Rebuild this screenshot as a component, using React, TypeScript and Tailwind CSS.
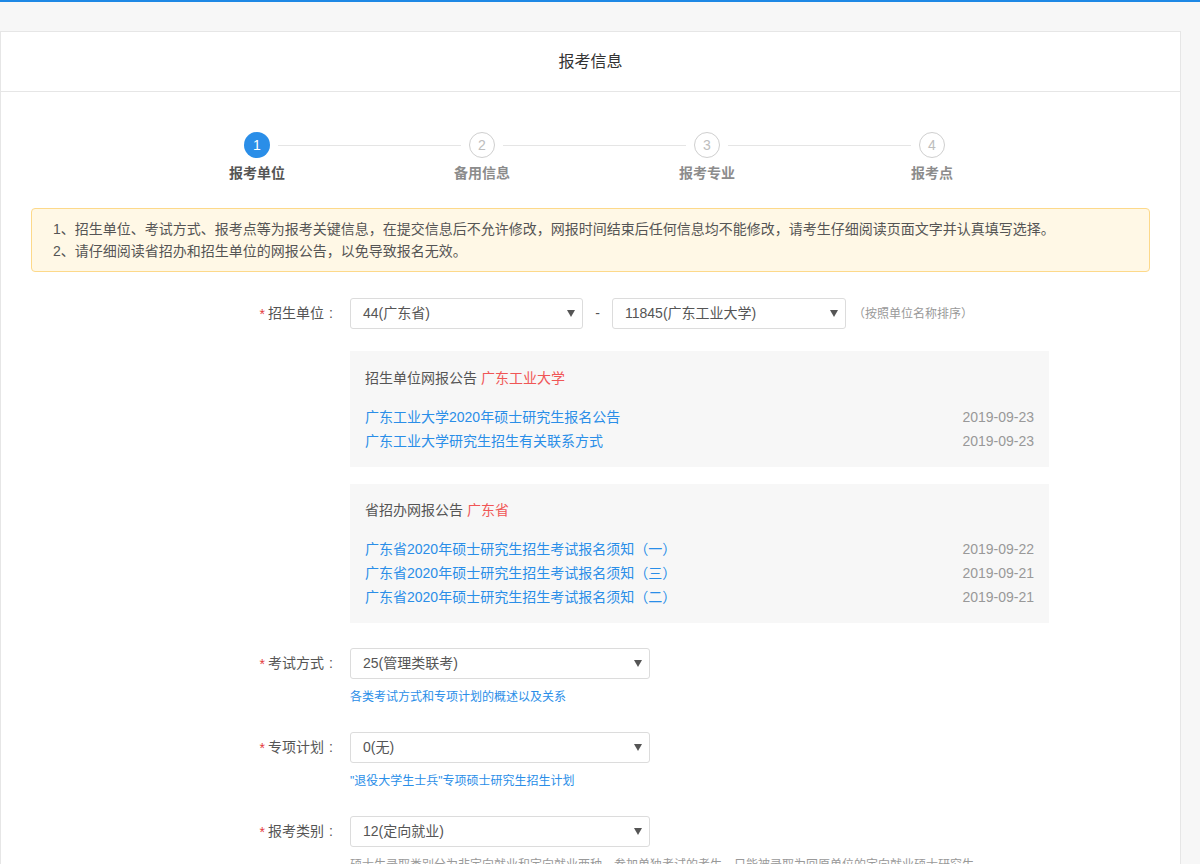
import React from 'react';

const FONT = { fontFamily: '"Liberation Sans", "Noto Sans CJK SC", sans-serif' };

const steps = ['报考单位', '备用信息', '报考专业', '报考点'];

function Caret() {
  return (
    <svg width="8" height="7" viewBox="0 0 8 7" className="shrink-0">
      <path d="M0 0 L8 0 L4 7 Z" fill="#555" />
    </svg>
  );
}

function FakeSelect({ value, width }: { value: string; width: string }) {
  return (
    <div
      className={`${width} h-[31px] border border-[#dcdcdc] rounded-[3px] bg-white flex items-center justify-between pl-[12px] pr-[7px] text-[14px] text-[#555]`}
    >
      <span>{value}</span>
      <Caret />
    </div>
  );
}

function Label({ text }: { text: string }) {
  return (
    <div className="w-[337px] h-[31px] flex items-center justify-end text-[14px] text-[#555] shrink-0">
      <span className="text-[#e4393c] mr-[3px] text-[14px] leading-none">*</span>
      <span>{text}</span>
      <span className="w-[14px] text-center">:</span>
    </div>
  );
}

function Notice({
  title,
  highlight,
  items,
  pt,
}: {
  title: string;
  highlight: string;
  items: { text: string; date: string }[];
  pt: string;
}) {
  return (
    <div className={`w-[699px] bg-[#f7f7f7] px-[15px] ${pt} pb-[14px]`}>
      <div className="leading-[20px] text-[14px] text-[#555]">
        {title} <span className="text-[#f05656]">{highlight}</span>
      </div>
      <div className="mt-[17px]">
        {items.map((it) => (
          <div key={it.text} className="flex justify-between leading-[24px] text-[14px]">
            <a className="text-[#2a8ee8] cursor-pointer">{it.text}</a>
            <span className="text-[#999]">{it.date}</span>
          </div>
        ))}
      </div>
    </div>
  );
}

export default function App() {
  return (
    <div className="min-h-screen bg-[#f7f7f7] border-t-2 border-[#1e88e5]" style={FONT}>
      <div className="pt-[29px]">
        <div className="w-[1181px] bg-white border border-[#e6e6e6] pb-[40px]">
          {/* 标题 */}
          <div className="h-[60px] flex items-center justify-center border-b border-[#e6e6e6] text-[16px] text-[#333]">
            报考信息
          </div>

          {/* 步骤条 */}
          <div className="w-[701px] ml-[243px] mt-[40px] flex items-start">
            {steps.map((s, i) => (
              <React.Fragment key={s}>
                {i > 0 && <div className="flex-1 h-px bg-[#e5e5e5] mx-[8px] mt-[13px]" />}
                <div className="w-[26px] flex flex-col items-center">
                  <div
                    className={
                      i === 0
                        ? 'w-[26px] h-[26px] rounded-full bg-[#2a8ee8] text-white flex items-center justify-center text-[14px]'
                        : 'w-[26px] h-[26px] rounded-full border border-[#cfcfcf] text-[#bdbdbd] flex items-center justify-center text-[14px]'
                    }
                  >
                    {i + 1}
                  </div>
                  <div
                    className={`mt-[5px] whitespace-nowrap text-[14px] font-bold leading-[20px] ${
                      i === 0 ? 'text-[#555]' : 'text-[#8c8c8c]'
                    }`}
                  >
                    {s}
                  </div>
                </div>
              </React.Fragment>
            ))}
          </div>

          {/* 提示 */}
          <div className="mx-[30px] mt-[25px] bg-[#fff8e6] border border-[#fdd98a] rounded-[4px] pl-[21px] pr-[20px] py-[9px] text-[14px] leading-[22px] text-[#555]">
            <p>1、招生单位、考试方式、报考点等为报考关键信息，在提交信息后不允许修改，网报时间结束后任何信息均不能修改，请考生仔细阅读页面文字并认真填写选择。</p>
            <p>2、请仔细阅读省招办和招生单位的网报公告，以免导致报名无效。</p>
          </div>

          {/* 招生单位 */}
          <div className="mt-[26px] flex gap-[12px]">
            <Label text="招生单位" />
            <div className="flex flex-col">
              <div className="flex items-center">
                <FakeSelect value="44(广东省)" width="w-[233px]" />
                <span className="w-[29px] text-center text-[14px] text-[#555]">-</span>
                <FakeSelect value="11845(广东工业大学)" width="w-[234px]" />
                <span className="ml-[7px] text-[12px] text-[#999]">（按照单位名称排序）</span>
              </div>
              <div className="mt-[22px]">
                <Notice
                  title="招生单位网报公告"
                  highlight="广东工业大学"
                  pt="pt-[17px]"
                  items={[
                    { text: '广东工业大学2020年硕士研究生报名公告', date: '2019-09-23' },
                    { text: '广东工业大学研究生招生有关联系方式', date: '2019-09-23' },
                  ]}
                />
              </div>
              <div className="mt-[17px]">
                <Notice
                  title="省招办网报公告"
                  highlight="广东省"
                  pt="pt-[16px]"
                  items={[
                    { text: '广东省2020年硕士研究生招生考试报名须知（一）', date: '2019-09-22' },
                    { text: '广东省2020年硕士研究生招生考试报名须知（三）', date: '2019-09-21' },
                    { text: '广东省2020年硕士研究生招生考试报名须知（二）', date: '2019-09-21' },
                  ]}
                />
              </div>
            </div>
          </div>

          {/* 考试方式 */}
          <div className="mt-[25px] flex gap-[12px]">
            <Label text="考试方式" />
            <div>
              <FakeSelect value="25(管理类联考)" width="w-[300px]" />
              <a className="block mt-[9px] text-[12px] leading-[18px] text-[#2a8ee8] cursor-pointer">
                各类考试方式和专项计划的概述以及关系
              </a>
            </div>
          </div>

          {/* 专项计划 */}
          <div className="mt-[26px] flex gap-[12px]">
            <Label text="专项计划" />
            <div>
              <FakeSelect value="0(无)" width="w-[300px]" />
              <a className="block mt-[9px] text-[12px] leading-[18px] text-[#2a8ee8] cursor-pointer">
                "退役大学生士兵"专项硕士研究生招生计划
              </a>
            </div>
          </div>

          {/* 报考类别 */}
          <div className="mt-[26px] flex gap-[12px]">
            <Label text="报考类别" />
            <div>
              <FakeSelect value="12(定向就业)" width="w-[300px]" />
              <p className="mt-[9px] text-[12px] leading-[18px] text-[#999] whitespace-nowrap">
                硕士生录取类别分为非定向就业和定向就业两种，参加单独考试的考生，只能被录取为回原单位的定向就业硕士研究生。
              </p>
            </div>
          </div>
        </div>
      </div>
    </div>
  );
}
